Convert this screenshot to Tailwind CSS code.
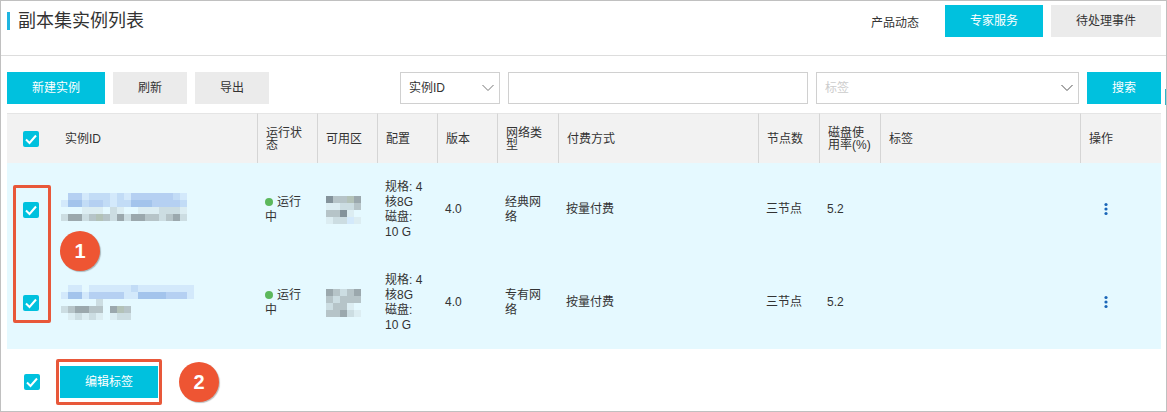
<!DOCTYPE html>
<html lang="zh-CN">
<head>
    <meta charset="UTF-8">
    <meta name="viewport" content="width=device-width, initial-scale=1.0">
    <title>副本集实例列表</title>
    <script src="https://cdn.jsdelivr.net/npm/@tailwindcss/browser@4"></script>
</head>
<body class="relative min-h-screen overflow-x-hidden border border-[#c0c0c0] bg-white font-['Liberation_Sans','Noto_Sans_CJK_SC',sans-serif] text-xs text-[#333]">
    <!-- Header -->
    <header class="flex items-center justify-between border-b border-[#ddd] pt-1 pr-[5px] pb-[18px] pl-[6px]">
        <h1 class="flex items-center gap-2 text-lg leading-[18px] font-normal"><span class="h-[18px] w-[3px] bg-[#1fb5e0]"></span>副本集实例列表</h1>
        <div class="flex items-center gap-2">
            <a href="#" class="mr-[18px] pt-1">产品动态</a>
            <button class="h-8 bg-[#00c1de] px-[25px] text-white">专家服务</button>
            <button class="h-8 bg-[#ebebeb] px-[25px]">待处理事件</button>
        </div>
    </header>

    <!-- Toolbar -->
    <div class="mt-4 flex gap-2 pr-[5px] pl-[6px]">
        <button class="h-8 bg-[#00c1de] px-[25px] text-white">新建实例</button>
        <button class="h-8 bg-[#ebebeb] px-[25px]">刷新</button>
        <button class="h-8 bg-[#ebebeb] px-[25px]">导出</button>
        <form class="ml-auto flex gap-2">
            <div class="grid w-[100px] items-center">
                <select aria-label="搜索条件" class="col-start-1 row-start-1 h-8 w-full appearance-none border border-[#d0d0d0] bg-white px-2">
                    <option>实例ID</option>
                </select>
                <svg class="pointer-events-none col-start-1 row-start-1 mr-[6px] justify-self-end" width="12" height="8" viewBox="0 0 12 8" fill="none" stroke="#777"><path d="M.5 1 6 6.5 11.5 1"/></svg>
            </div>
            <input type="text" aria-label="实例ID" class="h-8 w-[300px] border border-[#d0d0d0] px-2">
            <div class="grid w-[263px] items-center">
                <select aria-label="标签" class="col-start-1 row-start-1 h-8 w-full appearance-none border border-[#d0d0d0] bg-white px-2 text-[#ccc]">
                    <option>标签</option>
                </select>
                <svg class="pointer-events-none col-start-1 row-start-1 mr-[6px] justify-self-end" width="12" height="8" viewBox="0 0 12 8" fill="none" stroke="#555"><path d="M.5 1 6 6.5 11.5 1"/></svg>
            </div>
            <button type="button" class="h-8 bg-[#00c1de] px-[25px] text-white">搜索</button>
        </form>
    </div>
    <span class="absolute top-[88px] right-0 h-4 w-px bg-[#2fb5c9]"></span>

    <!-- Instance table -->
    <div class="relative mt-[9px] mr-[5px] ml-[6px]">
        <table class="w-full table-fixed border-separate border-spacing-0 text-left">
            <colgroup>
                <col class="w-[50px]">
                <col class="w-[200px]">
                <col class="w-[60px]">
                <col class="w-[60px]">
                <col class="w-[60px]">
                <col class="w-[60px]">
                <col class="w-[61px]">
                <col class="w-[200px]">
                <col class="w-[61px]">
                <col class="w-[61px]">
                <col>
                <col class="w-[81px]">
            </colgroup>
            <thead class="bg-[#f2f2f2] leading-3">
                <tr class="h-[50px]">
                    <th class="border-t border-[#e5e5e5] pl-4">
                        <label class="grid size-4">
                            <input type="checkbox" checked aria-label="全选" class="col-start-1 row-start-1 size-4 appearance-none rounded-xs bg-white checked:bg-[#00c1de]">
                            <svg class="pointer-events-none col-start-1 row-start-1" width="16" height="16" viewBox="0 0 16 16" fill="none" stroke="#fff" stroke-width="2"><path d="M3 8.5 6.5 12 13 4.5"/></svg>
                        </label>
                    </th>
                    <th class="border-t border-[#e5e5e5] px-2 font-normal">实例ID</th>
                    <th class="border-t border-l border-t-[#e5e5e5] border-l-[#d5d5d5] px-2 font-normal">运行状态</th>
                    <th class="border-t border-l border-t-[#e5e5e5] border-l-[#d5d5d5] px-2 font-normal">可用区</th>
                    <th class="border-t border-l border-t-[#e5e5e5] border-l-[#d5d5d5] px-2 font-normal">配置</th>
                    <th class="border-t border-l border-t-[#e5e5e5] border-l-[#d5d5d5] px-2 font-normal">版本</th>
                    <th class="border-t border-l border-t-[#e5e5e5] border-l-[#d5d5d5] px-2 font-normal">网络类型</th>
                    <th class="border-t border-l border-t-[#e5e5e5] border-l-[#d5d5d5] px-2 font-normal">付费方式</th>
                    <th class="border-t border-l border-t-[#e5e5e5] border-l-[#d5d5d5] px-2 font-normal">节点数</th>
                    <th class="border-t border-l border-t-[#e5e5e5] border-l-[#d5d5d5] px-2 font-normal">磁盘使用率(%)</th>
                    <th class="border-t border-l border-t-[#e5e5e5] border-l-[#d5d5d5] px-2 font-normal">标签</th>
                    <th class="border-t border-l border-t-[#e5e5e5] border-l-[#d5d5d5] px-2 font-normal">操作</th>
                </tr>
            </thead>
            <tbody class="bg-[#e5f9ff] leading-[15px]">
                <tr class="h-[93px]">
                    <td class="pl-4">
                        <label class="grid size-4">
                            <input type="checkbox" checked aria-label="选择实例" class="col-start-1 row-start-1 size-4 appearance-none rounded-xs bg-white checked:bg-[#00c1de]">
                            <svg class="pointer-events-none col-start-1 row-start-1" width="16" height="16" viewBox="0 0 16 16" fill="none" stroke="#fff" stroke-width="2"><path d="M3 8.5 6.5 12 13 4.5"/></svg>
                        </label>
                    </td>
                    <td class="px-1"><svg data-mask="id1" width="133" height="33"></svg></td>
                    <td class="px-2"><span class="mr-1 inline-block size-2 rounded-full bg-[#5cb85c]"></span>运行中</td>
                    <td class="px-[9px]"><svg data-mask="zone1" width="35" height="28"></svg></td>
                    <td class="px-2">规格: 4<br>核8G<br>磁盘:<br>10 G</td>
                    <td class="px-2">4.0</td>
                    <td class="px-2">经典网络</td>
                    <td class="px-2">按量付费</td>
                    <td class="px-2">三节点</td>
                    <td class="px-2">5.2</td>
                    <td class="px-2"></td>
                    <td class="px-5">
                        <button aria-label="更多" class="block px-1"><svg width="4" height="16" viewBox="0 0 4 16" fill="#1a66b8"><circle cx="2" cy="2.5" r="1.6"/><circle cx="2" cy="7" r="1.6"/><circle cx="2" cy="11.5" r="1.6"/></svg></button>
                    </td>
                </tr>
                <tr class="h-[93px]">
                    <td class="pl-4">
                        <label class="grid size-4">
                            <input type="checkbox" checked aria-label="选择实例" class="col-start-1 row-start-1 size-4 appearance-none rounded-xs bg-white checked:bg-[#00c1de]">
                            <svg class="pointer-events-none col-start-1 row-start-1" width="16" height="16" viewBox="0 0 16 16" fill="none" stroke="#fff" stroke-width="2"><path d="M3 8.5 6.5 12 13 4.5"/></svg>
                        </label>
                    </td>
                    <td class="px-1"><svg data-mask="id2" width="133" height="35"></svg></td>
                    <td class="px-2"><span class="mr-1 inline-block size-2 rounded-full bg-[#5cb85c]"></span>运行中</td>
                    <td class="px-[9px]"><svg data-mask="zone2" width="35" height="28"></svg></td>
                    <td class="px-2">规格: 4<br>核8G<br>磁盘:<br>10 G</td>
                    <td class="px-2">4.0</td>
                    <td class="px-2">专有网络</td>
                    <td class="px-2">按量付费</td>
                    <td class="px-2">三节点</td>
                    <td class="px-2">5.2</td>
                    <td class="px-2"></td>
                    <td class="px-5">
                        <button aria-label="更多" class="block px-1"><svg width="4" height="16" viewBox="0 0 4 16" fill="#1a66b8"><circle cx="2" cy="2.5" r="1.6"/><circle cx="2" cy="7" r="1.6"/><circle cx="2" cy="11.5" r="1.6"/></svg></button>
                    </td>
                </tr>
            </tbody>
        </table>
        <!-- Step 1 marker -->
        <span class="pointer-events-none absolute top-[72px] left-[6px] h-[138px] w-[38px] rounded-xs border-3 border-[#e8583a]"></span>
        <span class="absolute top-[118px] left-[53px] flex size-10 items-center justify-center rounded-full bg-[#ee5533] text-xl font-bold text-white shadow-[1px_1px_1px_#0004]">1</span>
    </div>

    <!-- Batch actions -->
    <div class="mt-[10px] flex items-center pl-[23px]">
        <label class="grid size-4">
            <input type="checkbox" checked aria-label="全选" class="col-start-1 row-start-1 size-4 appearance-none rounded-xs bg-white checked:bg-[#00c1de]">
            <svg class="pointer-events-none col-start-1 row-start-1" width="16" height="16" viewBox="0 0 16 16" fill="none" stroke="#fff" stroke-width="2"><path d="M3 8.5 6.5 12 13 4.5"/></svg>
        </label>
        <div class="ml-4 rounded-xs border-3 border-[#e8583a] px-px py-1">
            <button class="block h-8 bg-[#00c1de] px-[25px] text-white">编辑标签</button>
        </div>
        <!-- Step 2 marker -->
        <span class="ml-[17px] flex size-10 items-center justify-center rounded-full bg-[#ee5533] text-xl font-bold text-white shadow-[1px_1px_1px_#0004]">2</span>
    </div>

    <script>
        // masked values, one letter per 7px block
        const colors = {
            a: '#d3e9fb', b: '#c2dcf6', c: '#b5d0f2', d: '#a3c4ec',
            e: '#dcedf2', f: '#ccdde2', g: '#b6c4c8', h: '#9ba8ad', i: '#84939b', j: '#b3c2b8'
        };
        const masks = {
            id1: [
                '.ccabbbabaccccccba',
                'addbccbabbdddccccb',
                '...eee.fe..eeefffe',
                'fhhfgjgfhfhhggfghf'
            ],
            id2: [
                '.aa.aaaaaabaaaaaaaa',
                'addacccccaaddddccca',
                '.....f.............',
                'fghhgg.hjg.........',
                '.efefe.eff.........'
            ],
            zone1: ['iggjh', 'eeffg', 'ggie.', 'effae'],
            zone2: ['hgfgh', 'gfggg', 'fgge.', 'gghfe']
        };
        document.querySelectorAll('svg[data-mask]').forEach(svg => {
            let rects = '';
            masks[svg.dataset.mask].forEach((row, y) => {
                [...row].forEach((key, x) => {
                    if (colors[key]) rects += `<rect x="${x * 7}" y="${y * 7}" width="7" height="7" fill="${colors[key]}"/>`;
                });
            });
            svg.innerHTML = rects;
        });
    </script>
</body>
</html>
